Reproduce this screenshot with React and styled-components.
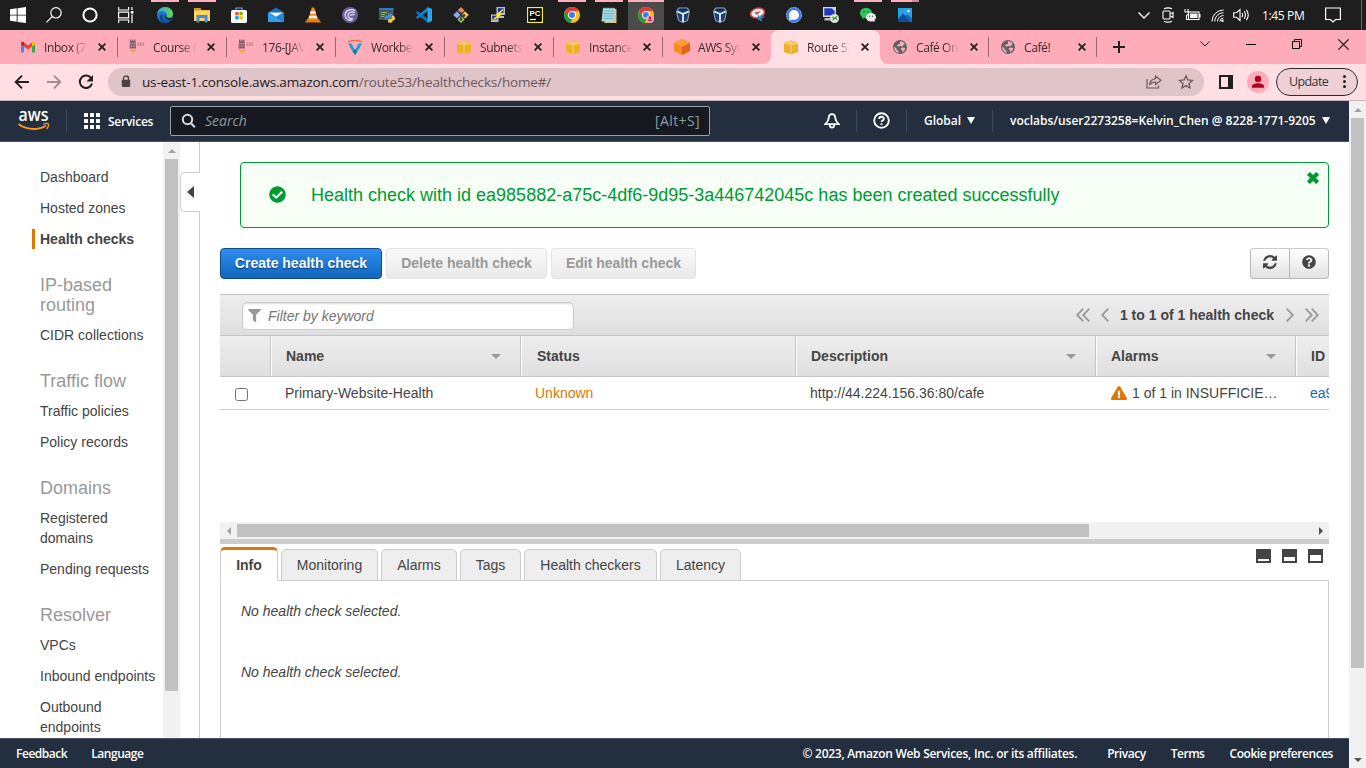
import React from 'react';
import styled, { createGlobalStyle, css } from 'styled-components';
import { FaCheckCircle, FaQuestionCircle, FaExclamationTriangle, FaFilter } from 'react-icons/fa';

const ui = '"Open Sans", "Noto Sans", sans-serif';
const arial = '"Liberation Sans", Arial, sans-serif';

const GlobalStyle = createGlobalStyle`
  * { box-sizing: border-box; }
  html, body { margin: 0; padding: 0; overflow: hidden; background: #fff; }
  svg { display: block; flex: none; }
`;

const Screen = styled.div`
  width: 1366px;
  height: 768px;
  display: flex;
  flex-direction: column;
  overflow: hidden;
  font-family: ${arial};
  font-size: 14px;
  color: #444;
`;

/* ---------- Taskbar ---------- */

const Taskbar = styled.div`
  height: 30px;
  flex: none;
  display: flex;
  background: #1e1e1e;
  color: #fff;
`;

const SystemButtons = styled.div`
  display: flex;
  margin-right: 3px;
`;

const RunningApps = styled.div`
  display: flex;
  gap: 1px;
`;

const TaskButton = styled.div`
  position: relative;
  width: 36px;
  height: 30px;
  display: flex;
  align-items: center;
  justify-content: center;
  background: ${p => (p.$active ? '#4c4b4b' : 'transparent')};
  ${p => p.$open && css`
    &::before {
      content: '';
      position: absolute;
      top: 0;
      left: ${p.$active ? 0 : 4}px;
      right: ${p.$active ? 0 : 4}px;
      height: 2px;
      background: ${p.$stacked ? 'linear-gradient(90deg, #ffaebb 21px, #c98c96 21px)' : '#ffaebb'};
    }
  `}
`;

const Tray = styled.div`
  margin-left: auto;
  display: flex;
  align-items: center;
  padding-right: 4px;
`;

const TrayIcon = styled.div`
  width: ${p => p.$w}px;
  display: flex;
  justify-content: center;
`;

const Clock = styled.div`
  width: 51px;
  padding-left: 9px;
  font: 12px ${ui};
  letter-spacing: -0.35px;
  white-space: nowrap;
`;

const DesktopPeek = styled.div`
  width: 1px;
  height: 30px;
  background: #6a6a6a;
`;

/* ---------- Browser chrome ---------- */

const TabStrip = styled.div`
  height: 34px;
  flex: none;
  display: flex;
  padding-left: 8px;
  background: #ffacba;
`;

const BrowserTab = styled.div`
  position: relative;
  width: ${p => p.$w || 109}px;
  height: 34px;
  display: flex;
  align-items: center;
  padding-left: 12px;
  border-radius: 8px 8px 0 0;
  background: ${p => (p.$active ? '#ffdee4' : 'transparent')};
  &::after {
    content: '';
    position: absolute;
    right: -1px;
    top: 7px;
    width: 1px;
    height: 20px;
    background: ${p => (p.$divider ? '#9a6670' : 'transparent')};
  }
`;

const TabCurve = styled.svg`
  position: absolute;
  bottom: 0;
  ${p => (p.$right ? 'right: -8px;' : 'left: -8px;')}
`;

const TabTitle = styled.div`
  width: 45px;
  margin-left: 8px;
  white-space: nowrap;
  font: 12px ${ui};
  letter-spacing: -0.4px;
  color: #3a2a2e;
  mask-image: ${p => (p.$fade ? 'linear-gradient(90deg, #000 62%, transparent 96%)' : 'none')};
`;

const TabClose = styled.div`
  margin-left: 8.5px;
`;

const NewTab = styled.div`
  width: 46px;
  display: flex;
  align-items: center;
  justify-content: center;
`;

const WindowControls = styled.div`
  margin-left: auto;
  display: flex;
  height: 28px;
`;

const WindowButton = styled.div`
  width: 46px;
  display: flex;
  align-items: center;
  justify-content: center;
`;

const Toolbar = styled.div`
  height: 37px;
  flex: none;
  display: flex;
  align-items: center;
  padding: 0 8px 1px 12px;
  background: #ffdee4;
  border-bottom: 1px solid #cdb6ba;
`;

const NavButton = styled.div`
  width: 32px;
  display: flex;
  padding-left: 2px;
`;

const AddressBar = styled.div`
  width: 1096px;
  height: 28px;
  display: flex;
  align-items: center;
  padding: 0 10px 0 13px;
  border-radius: 14px;
  background: #dfc4c9;
  font: 13.5px ${ui};
`;

const Url = styled.div`
  margin-left: 11px;
  flex: 1;
  white-space: nowrap;
  color: #6b5a5d;
  letter-spacing: -0.16px;
  b { font-weight: 400; color: #241c1e; }
`;

const AddressAction = styled.div`
  margin-left: 16px;
`;

const SidePanelIcon = styled.div`
  width: 14px;
  height: 14px;
  margin-left: 15px;
  border: 2px solid #1f1f1f;
  border-right-width: 5px;
`;

const Avatar = styled.div`
  width: 22px;
  height: 22px;
  margin-left: 14px;
  border-radius: 50%;
  background: #ffacba;
`;

const UpdateButton = styled.div`
  width: 82px;
  height: 28px;
  margin-left: 7px;
  display: flex;
  align-items: center;
  justify-content: space-between;
  padding: 0 11px 0 12px;
  border: 1px solid #2d2d2d;
  border-radius: 14px;
  background: #eed0d6;
  font: 12.5px ${ui};
  letter-spacing: -0.6px;
  color: #3a3436;
`;

/* ---------- Scrollbars ---------- */

const VerticalScrollbar = styled.div`
  width: 17px;
  flex: none;
  display: flex;
  flex-direction: column;
  align-items: center;
  background: #f1f1f1;
`;

const HorizontalScrollbar = styled.div`
  height: 17px;
  flex: none;
  display: flex;
  align-items: center;
  background: #f1f1f1;
`;

const ScrollArrow = styled.div`
  width: 17px;
  height: 17px;
  display: flex;
  align-items: center;
  justify-content: center;
  ${p => p.$last && (p.$last === 'v' ? 'margin-top: auto;' : 'margin-left: auto;')}
`;

const Thumb = styled.div`
  width: ${p => p.$w}px;
  height: ${p => p.$h}px;
  background: #c1c1c1;
`;

/* ---------- AWS console ---------- */

const Viewport = styled.div`
  flex: 1;
  min-height: 0;
  display: flex;
`;

const Console = styled.div`
  width: 1349px;
  display: flex;
  flex-direction: column;
`;

const ConsoleHeader = styled.div`
  height: 41px;
  flex: none;
  display: flex;
  align-items: center;
  border-bottom: 1px solid #4b5563;
  background: #232f3e;
  color: #fff;
  font: 600 12px ${ui};
  white-space: nowrap;
`;

const AwsLogo = styled.div`
  width: 66px;
  padding-left: 17px;
`;

const HeaderRule = styled.div`
  width: 1px;
  height: 22px;
  flex: none;
  background: #3f4a59;
`;

const Services = styled.div`
  width: 103px;
  display: flex;
  align-items: center;
  gap: 8px;
  padding-left: 17px;
  letter-spacing: -0.25px;
`;

const SearchBox = styled.div`
  width: 540px;
  height: 30px;
  display: flex;
  align-items: center;
  padding: 0 9px 1px 10px;
  border: 1px solid #95a5a6;
  border-radius: 2px;
  background: #16191f;
  color: #8d9c9e;
  font: 14px ${ui};
`;

const SearchHint = styled.div`
  flex: 1;
  margin-left: 8px;
  font-style: italic;
`;

const SearchShortcut = styled.div`
  letter-spacing: 0.4px;
`;

const HeaderSlot = styled.div`
  width: ${p => p.$w}px;
  display: flex;
  align-items: center;
  justify-content: center;
  gap: 6px;
  padding-bottom: 1px;
`;

const HeaderActions = styled.div`
  display: flex;
  align-items: center;
  margin-left: 97px;
`;

const Account = styled.div`
  display: flex;
  align-items: center;
  gap: 6px;
  padding: 0 0 1px 17px;
`;

const Body = styled.div`
  flex: 1;
  min-height: 0;
  display: flex;
  overflow: hidden;
  background: #fff;
`;

const Sidebar = styled.nav`
  width: 163px;
  flex: none;
  padding: 25px 0 0 40px;
  overflow: hidden;
`;

const NavItem = styled.div`
  position: relative;
  line-height: 20px;
  margin-bottom: 11px;
  width: ${p => (p.$narrow ? '90px' : 'auto')};
  white-space: ${p => (p.$narrow ? 'normal' : 'nowrap')};
  font-weight: ${p => (p.$active ? 700 : 400)};
  ${p => p.$active && css`
    margin-left: -8px;
    padding-left: 5px;
    border-left: 3px solid #e07700;
  `}
`;

const NavHeading = styled.div`
  width: 100px;
  margin: 26px 0 10px;
  font-size: 18px;
  line-height: 20px;
  color: #999;
`;

const CollapseRail = styled.div`
  width: 20px;
  flex: none;
  padding-top: 30px;
  border-right: 1px solid #ccc;
`;

const CollapseHandle = styled.div`
  width: 20px;
  height: 40px;
  display: flex;
  align-items: center;
  padding-left: 6px;
  border: 1px solid #ccc;
  border-right: 0;
  border-radius: 5px 0 0 5px;
  background: #fff;
`;

const Main = styled.main`
  width: 1149px;
  padding: 20px 20px 0;
  display: flex;
  flex-direction: column;
`;

const Alert = styled.div`
  height: 66px;
  flex: none;
  display: flex;
  align-items: center;
  margin-left: 20px;
  padding: 0 9px 0 28px;
  border: 1px solid #009933;
  border-radius: 4px;
  background: #f6fef6;
  color: #009933;
  font-size: 18px;
`;

const AlertIcon = styled.div`
  width: 17px;
  padding-bottom: 2px;
`;

const AlertText = styled.div`
  flex: 1;
  margin-left: 25px;
  white-space: nowrap;
`;

const AlertClose = styled.div`
  align-self: flex-start;
  margin-top: 9px;
`;

const Actions = styled.div`
  display: flex;
  gap: 4px;
  margin-top: 20px;
  height: 31px;
  flex: none;
`;

const Button = styled.div`
  width: ${p => p.$w}px;
  display: flex;
  align-items: center;
  justify-content: center;
  padding-bottom: 2px;
  border-radius: 4px;
  font-weight: 700;
  white-space: nowrap;
  ${p => p.$primary
    ? css`
        border: 1px solid #0f4b8a;
        background: linear-gradient(#2e8df0, #1166bb);
        color: #fff;
        text-shadow: 0 1px 1px #063a73;
      `
    : css`
        border: 1px solid #e3e3e3;
        background: linear-gradient(#f9f9f9, #eaeaea);
        color: #999;
      `}
`;

const IconGroup = styled.div`
  margin-left: auto;
  width: 79px;
  display: flex;
  border: 1px solid #b8b8b8;
  border-top-color: #ccc;
  border-radius: 4px;
  background: linear-gradient(#ffffff, #e2e2e2);
`;

const IconButton = styled.div`
  flex: 1;
  display: flex;
  align-items: center;
  justify-content: center;
  padding-bottom: 3px;
  & + & { border-left: 1px solid #b8b8b8; }
`;

const TableBar = styled.div`
  height: 42px;
  flex: none;
  margin-top: 15px;
  display: flex;
  align-items: center;
  padding: 1px 10px 0 22px;
  border-top: 1px solid #c8c8c8;
  border-bottom: 1px solid #c4c4c4;
  background: linear-gradient(#eeeeee, #dfdfdf);
`;

const FilterInput = styled.div`
  width: 332px;
  height: 28px;
  display: flex;
  align-items: center;
  gap: 7px;
  padding-left: 5px;
  border: 1px solid #ccc;
  border-radius: 5px;
  background: #fff;
  box-shadow: inset 0 1px 2px #ddd;
  font-style: italic;
  color: #757575;
`;

const Pager = styled.div`
  margin-left: auto;
  display: flex;
  align-items: center;
  gap: 11px;
  padding-bottom: 2px;
  font-weight: 700;
`;

const PagerLabel = styled.div`
  margin-right: 1px;
`;

const HeadRow = styled.div`
  height: 41px;
  flex: none;
  display: flex;
  border-bottom: 1px solid #c4c4c4;
  background: linear-gradient(#eeeeee, #dfdfdf);
  overflow: hidden;
`;

const HeadCell = styled.div`
  width: ${p => p.$w}px;
  flex: none;
  display: flex;
  align-items: center;
  justify-content: space-between;
  padding: 0 19px 0 ${p => (p.$sortable || p.$last ? 15 : 16)}px;
  border-right: 1px solid #c4c4c4;
  box-shadow: inset 1px 0 0 ${p => (p.$first ? 'transparent' : '#fff')};
  font-weight: 700;
`;

const DataRow = styled.div`
  height: 33px;
  flex: none;
  display: flex;
  border-bottom: 1px solid #ccc;
  overflow: hidden;
`;

const DataCell = styled.div`
  width: ${p => p.$w}px;
  flex: none;
  display: flex;
  align-items: center;
  gap: 5px;
  padding-left: ${p => (p.$icon ? 15 : 14)}px;
  white-space: nowrap;
  color: ${p => p.$color || '#444'};
`;

const Checkbox = styled.div`
  width: 13px;
  height: 13px;
  margin-top: 3px;
  border: 1px solid #767676;
  border-radius: 2.5px;
  background: #fff;
`;

const TableSpace = styled.div`
  height: 112px;
  flex: none;
`;

const Splitter = styled.div`
  height: 5px;
  flex: none;
  background: #ccc;
`;

const DetailTabs = styled.div`
  height: 37px;
  flex: none;
  display: flex;
  align-items: flex-end;
  gap: 3px;
  position: relative;
  z-index: 1;
  margin-bottom: -1px;
`;

const DetailTab = styled.div`
  width: ${p => p.$w}px;
  height: ${p => (p.$active ? 34 : 32)}px;
  line-height: 31px;
  text-align: center;
  white-space: nowrap;
  border: 1px solid #ccc;
  border-radius: 5px 5px 0 0;
  background: #eee;
  ${p => p.$active && css`
    border-top: 3px solid #e07700;
    border-bottom-color: #fff;
    background: #fff;
    font-weight: 700;
  `}
`;

const PaneSizes = styled.div`
  margin-left: auto;
  align-self: flex-start;
  display: flex;
  gap: 11px;
  padding: 5px 6px 0 0;
`;

const PaneSize = styled.div`
  width: 15px;
  height: 14px;
  border: 2px solid #444;
  border-top-width: ${p => p.$top}px;
`;

const DetailPanel = styled.div`
  flex: 1;
  padding: 20px 20px 0;
  border: 1px solid #ccc;
  border-bottom: 0;
  font-style: italic;
`;

const Empty = styled.p`
  margin: 0 0 41px;
  line-height: 20px;
`;

const Footer = styled.footer`
  height: 30px;
  flex: none;
  display: flex;
  align-items: center;
  padding: 0 16px;
  border-top: 1px solid #4b5563;
  background: #232f3e;
  color: #fff;
  font: 600 12px ${ui};
  white-space: nowrap;
`;

const FooterItem = styled.div`
  margin-left: ${p => (p.$push ? 'auto' : `${p.$gap || 0}px`)};
  letter-spacing: ${p => (p.$push ? -0.28 : -0.46)}px;
`;

/* ---------- Icons ---------- */

const Svg = ({ s = 16, w, h, vb, children, ...rest }) => (
  <svg width={w || s} height={h || s} viewBox={vb || `0 0 ${w || s} ${h || s}`} fill="none" {...rest}>{children}</svg>
);

const Windows = () => <Svg><path fill="#fff" d="M0 2.3 6.7 1.3V7.7H0zM7.6 1.2 16 0V7.7H7.6zM0 8.5H6.7V14.8L0 13.8zM7.6 8.5H16V16L7.6 14.9z" /></Svg>;
const Magnifier = () => <Svg stroke="#fff" strokeWidth="1.2"><circle cx="10" cy="5.8" r="5.2" /><path d="M6.2 9.6.4 15.4" /></Svg>;
const Cortana = () => <Svg><circle cx="8" cy="8" r="6.6" stroke="#fff" strokeWidth="2" /></Svg>;
const TaskView = () => <Svg stroke="#fff" strokeWidth="1.2"><path d="M.6 0v3h10V0M.6 16v-3h10v3M.6 5.2h10v5.6H.6zM14 0v3M14 7.5V16" /><path d="M12.8 4h2.6v2.6h-2.6z" fill="#fff" stroke="none" /></Svg>;

const Edge = () => (
  <Svg>
    <defs>
      <linearGradient id="edgeTop" x1="0" y1="0" x2="16" y2="6" gradientUnits="userSpaceOnUse"><stop stopColor="#2ba6df" /><stop offset="1" stopColor="#62d84f" /></linearGradient>
    </defs>
    <circle cx="8" cy="8" r="8" fill="#1b77cd" />
    <path d="M0 7.4C1 3 4 0 8.2 0 13 0 16 3.6 16 7c0 2.4-1.9 3.9-4 3.9-2 0-3-.8-2.3-1.9C11 6.6 8 3.9 5 4.2 2.5 4.4.9 5.9 0 7.4z" fill="url(#edgeTop)" />
    <path d="M6.2 7.2C4.5 11 8 15 13.5 13.8 10 17.4 3 16 2.6 10.7 2.5 8.5 4.2 7.1 6.2 7.2z" fill="#114a8b" />
    <path d="M9.3 8.2c-.8 1.5 1.2 3.6 5.9 2.2l-1.4 2.8c-4.3 1-7-1.9-6.2-5z" fill="#1f1f1f" opacity=".85" />
  </Svg>
);
const Explorer = () => <Svg><path fill="#d9952b" d="M0 1h6.500l1 2H16v4H0z" /><path fill="#ffd55f" d="M0 3.500h16V14H0z" /><path fill="#3d8fd8" d="M2.500 8h11v7.500h-3V11h-5v4.500h-3z" /></Svg>;
const Store = () => <Svg><path d="M5 3.500V1h6v2.500" stroke="#4cb8ee" strokeWidth="1.200" /><rect y="3" width="16" height="13" rx="1.500" fill="#f7f7f7" /><path fill="#f25022" d="M4.300 5h3.300v3.300H4.300z" /><path fill="#7fba00" d="M8.400 5h3.300v3.300H8.400z" /><path fill="#00a4ef" d="M4.300 9.100h3.300v3.300H4.300z" /><path fill="#ffb900" d="M8.400 9.100h3.300v3.300H8.400z" /></Svg>;
const Mail = () => <Svg><path fill="#1170c0" d="M0 5.500 8 .5l8 5z" /><path fill="#2488d8" d="M0 5.500h16V15H0z" /><path fill="#f4f4f4" d="M1 5.500h14L8 9.800z" /><path fill="#2ea3ea" d="M0 15V6l15 9z" /><path fill="#1f86d6" d="M16 15V6L8 10.500z" /></Svg>;
const Cone = () => <Svg><path fill="#e67a13" d="M2.500 11.500h11L16 15.500H0z" /><path fill="#f28a1c" d="M6.800.5h2.400l3.600 12.500H3.200z" /><path fill="#e9e9e9" d="M5.700 4h4.600l.9 2.700H4.800zM4.200 8.700h7.600l.8 2.600H3.400z" /></Svg>;
const Torrent = () => <Svg><circle cx="8" cy="8" r="8" fill="#6d5f9e" /><path d="M13.500 3.500C8 1 3 4 3.200 8.500 3.500 12 7 14 10.500 13M13 5.700C9.500 4 6 5.500 6 8.500c.2 2.500 2.500 3.500 5 3M12.500 8c-2-1-4-.3-4 1" stroke="#e6e0f2" strokeWidth="1.300" /></Svg>;
const PyWindow = () => <Svg><rect y="1" width="14.500" height="12" fill="#43586a" /><path fill="#2b7bb9" d="M0 1h14.500v2H0z" /><path d="M2 5.500h6M2 7.500h4M2 9.500h3" stroke="#8fb35b" /><path fill="#4389c9" d="M5.500 10.500C5.500 8 7 8.500 9 8.500V6.500c2.500-1 4 0 4 1.500v3H9L7.500 13c-1.500 0-2-1-2-2.500z" /><path fill="#f1c83b" d="M9 14.500c0-3 1-2.500 4-3V8.500c2.500 0 3 1.500 3 3s-1 2-2.500 2V15c-2 1.200-4.500.8-4.500-.5z" /></Svg>;
const VsCode = () => <Svg><path fill="#0b73b7" d="M.3 5.200 1.500 4 12 12v4L.3 6.300z" /><path fill="#1180c8" d="M.3 10.800 1.500 12 12 4V0L.3 9.700z" /><path d="M11.500 0 16 2v12l-4.500 2z" fill="#2ea5ea" /></Svg>;
const GitIcon = () => <Svg><path fill="#f0806a" d="m8 0 3.500 3.500L8 7 4.500 3.500z" /><path fill="#7fb0f5" d="M4 4.300 7.500 8 4 11.600.2 8z" /><path fill="#f0c95c" d="M12 4.300 15.800 8 12 11.600 8.500 8z" /><path fill="#a4d66a" d="M8 9l3.500 3.500L8 16l-3.500-3.500z" /><path d="M5 3.500 11 9.500M8 5v8" stroke="#333" /><circle cx="8" cy="12.500" r="1.300" fill="#333" /><circle cx="11" cy="8.500" r="1.300" fill="#333" /></Svg>;
const Putty = () => <Svg><path fill="#bdbdbd" d="M6.500 0H15v8H6.500zM1 7.500h7.500V15H1zM8 9h6v2H8z" /><path fill="#1b2aa5" d="M8 1.200h5.500v4.500H8zM2.300 8.700h4.700v3.800H2.300z" /><path d="M13 2.500 7.500 7.500h3L4 12" stroke="#f4ea28" strokeWidth="1.600" /></Svg>;
const PyCharm = () => <Svg><rect x=".6" y=".6" width="14.800" height="14.800" fill="#000" stroke="#f5f13b" strokeWidth="1.200" /><text x="2.500" y="9" fontFamily="Liberation Sans" fontWeight="700" fontSize="8" fill="#fff">PC</text><path d="M3 12.500h6" stroke="#fff" strokeWidth="1.300" /></Svg>;
const Chrome = ({ badge }) => (
  <Svg>
    <circle cx="8" cy="8" r="8" fill="#fbc116" />
    <path fill="#e33b2e" d="M1.100 4A8 8 0 0 1 14.900 4H8L4.500 10z" />
    <path fill="#259a47" d="M1.100 4 4.500 10 8 12 7 15.900A8 8 0 0 1 1.100 4z" />
    <circle cx="8" cy="8" r="3.900" fill="#fff" /><circle cx="8" cy="8" r="3" fill="#3b7de9" />
    {badge && <><circle cx="12" cy="12" r="4" fill="#f5a3b3" /><circle cx="12" cy="11" r="1.400" fill="#b3284c" /><path fill="#b3284c" d="M9.800 14c.5-2 3.900-2 4.400 0z" /></>}
  </Svg>
);
const Notepad = () => <Svg><path fill="#d9c08a" d="M12 2h3.500v14H3z" /><path fill="#a8dbe4" d="M2 1h12l-1 13.500H.5z" /><path d="M3 4h10M2.800 6.500h10M2.500 9h10M2.200 11.500h10" stroke="#5fa7b8" strokeWidth=".8" /><path d="M2.500 1.200h11" stroke="#7b8b90" strokeWidth="1.600" strokeDasharray="1 1" /></Svg>;
const VBox = () => <Svg><path fill="#1c3f73" stroke="#a9bdd6" strokeWidth=".9" d="M3.500 1h9l2 3.500-2 9L8 15.500l-4.500-2-2-9z" /><path d="M2.300 4.500 8 7l5.700-2.500" stroke="#f2f6fb" strokeWidth="1.500" /><path d="M8 7v8" stroke="#f2f6fb" strokeWidth="1.700" /><path d="M4.500 2.500h7" stroke="#0d2244" strokeWidth="1.500" /></Svg>;
const Snip = () => <Svg><ellipse cx="8.500" cy="6" rx="7" ry="4.800" fill="#f2f2f2" stroke="#d9424a" strokeWidth="1.500" transform="rotate(-15 8.500 6)" /><path d="M8 8 5 5.500 12 4z" fill="#c95359" /><path d="M9 8.500 12.500 14M13 9 9 13" stroke="#2f8fc6" strokeWidth="1.500" /><circle cx="13.200" cy="9.500" r="1.600" stroke="#2f8fc6" /></Svg>;
const Signal = () => <Svg><circle cx="8" cy="8" r="7.500" fill="#3b76f0" stroke="#9fbdf8" strokeDasharray="2 .6" /><circle cx="8" cy="8" r="5" fill="#fff" /><path fill="#fff" d="m2.800 13.500 1-3.500 2.600 2.600z" /></Svg>;
const Remote = () => <Svg><rect x="0" y="0" width="13" height="10" fill="#d8d8cf" /><path fill="#2238c4" d="M1.300 1.300h10.400v7.200H1.300z" /><path fill="#fff" d="M9 1.300h2.700v3z" /><path fill="#bdbdb5" d="M1.500 11h8.500v2.500H1.500z" /><circle cx="11.500" cy="11.500" r="4.500" fill="#dfe5df" /><path d="m9.500 10 2 1.500-2 1.500m4.500-3.500-2 1.500 2 1.500" stroke="#3c8f3c" strokeWidth="1.200" /></Svg>;
const WeChat = () => <Svg><ellipse cx="6" cy="6" rx="6" ry="5.200" fill="#2fc35d" /><path fill="#2fc35d" d="m2 12 .6-3L5 10.500z" /><circle cx="4" cy="4.800" r=".8" fill="#175c2c" /><circle cx="8" cy="4.800" r=".8" fill="#175c2c" /><ellipse cx="11" cy="10.200" rx="5" ry="4.300" fill="#ececec" /><path fill="#ececec" d="m14.700 15.200-.6-2.500-2 1z" /><circle cx="9.500" cy="9.200" r=".7" fill="#555" /><circle cx="12.600" cy="9.200" r=".7" fill="#555" /></Svg>;
const Photos = () => <Svg><path fill="#2b9fe8" d="M1 1h14v14H1z" /><path fill="#0b4f9c" d="m1 12 5-5.500L14 15H1z" /><path fill="#1769bd" d="m8.500 9 2-1.800L15 11.500V15h-1z" /><circle cx="11.500" cy="4" r="1.200" fill="#fff" /></Svg>;

const apps = [
  { icon: Edge, open: true }, { icon: Explorer, open: true }, { icon: Store }, { icon: Mail }, { icon: Cone },
  { icon: Torrent }, { icon: PyWindow }, { icon: VsCode }, { icon: GitIcon }, { icon: Putty }, { icon: PyCharm },
  { icon: Chrome, open: true }, { icon: Notepad, open: true }, { icon: Chrome, open: true, active: true },
  { icon: VBox }, { icon: VBox }, { icon: Snip }, { icon: Signal }, { icon: Remote }, { icon: WeChat, open: true },
  { icon: Photos, open: true, stacked: true },
];

const Gmail = () => <Svg><path fill="#4285f4" d="M1 4v9.500h3V7.500L1 5z" /><path fill="#34a853" d="M12 13.500h3V5l-3 2.500z" /><path fill="#ea4335" d="M4 3.500 8 6.600l4-3.100v4L8 10.500 4 7.500z" /><path fill="#c5221f" d="M1 4.200C1 2.600 2.800 2.300 4 3.300v4.200L1 5.300z" /><path fill="#fbbc04" d="M12 3.300c1.200-1 3-.7 3 .9v1.100l-3 2.200z" /></Svg>;
const Vocareum = () => <Svg><path fill="#5f4450" opacity=".75" d="M1 .5h1.200v1.200h1V.5h1v1.200h1V.5h1.300l.5 9H.5z" /><path d="M1 4.500h5.500M1 7h5.500" stroke="#cf8f9c" strokeWidth=".8" /><path d="M8.500 5.200h7" stroke="#8d5f6c" strokeWidth="3.400" strokeDasharray="1.600 .7" opacity=".5" /><path d="M1.200 10.500Q4.200 13.500 7 10.500" stroke="#f79a4a" strokeWidth="1.500" /><path d="M2.500 12h3.400L4.200 15z" fill="#f8a552" /></Svg>;
const Workbench = () => <Svg><path fill="#19a3d4" d="M1 4.500h3.500L8 11.500l3.500-7H15L8.800 15.500H7.200z" /><path fill="#0e6f9c" d="m8 15.500-1.500-3L8 9.500l1.500 3z" /><path d="M1 3C4 .7 12 .7 15 3" stroke="#f0683c" strokeWidth="1.300" /></Svg>;
const Cube = () => <Svg><path fill="#eeb02a" d="M1 4 8 1.500 15 4v9L8 15.500 1 13z" /><path fill="#f7c24a" d="M1 4 8 1.500 15 4 8 5.500z" /><path d="M8 5.500v10M1 4.200l7 1.500 7-1.500M5 2.800l6.500 2.200" stroke="#fadb93" strokeWidth=".8" /></Svg>;
const OrangeCube = () => <Svg><path fill="#f58a1f" d="M0 4 8 0l8 4v8l-8 4-8-4z" /><path fill="#fb9d33" d="m0 4 8-4 8 4-8 4z" /><path fill="#e5611c" d="m8 8 8-4v8l-8 4z" /></Svg>;
const Globe = () => <Svg><circle cx="8" cy="8" r="7" fill="#5f6368" /><path fill="#ffacba" d="M2.300 7.500 4.500 9.500v1.200l2 1v2.200A6 6 0 0 1 2.300 7.500zM8 2.200c2.300 0 4 1.300 5 2.800l-1.500.5-1 2.200-2-1-1.800.8-1.700-.8 1.300-1.500 1.700-.3zM9 9l2.500-.5 1.800 1c-.5 1.800-1.700 3-3.300 3.800l.3-2.300-1.800-1z" /></Svg>;

const Cross = ({ s = 8, w = 1.8, c = '#231f20' }) => {
  const near = w / 3;
  const far = s - near;
  return <Svg s={s} stroke={c} strokeWidth={w}><path d={`M${near} ${near}L${far} ${far}M${far} ${near}L${near} ${far}`} /></Svg>;
};

const Triangle = ({ dir, c = '#505050', long = 8, short = 4 }) => {
  const vertical = dir === 'up' || dir === 'down';
  const w = vertical ? long : short;
  const h = vertical ? short : long;
  const points = {
    up: `0,${h} ${w},${h} ${w / 2},0`,
    down: `0,0 ${w},0 ${w / 2},${h}`,
    left: `${w},0 ${w},${h} 0,${h / 2}`,
    right: `0,0 0,${h} ${w},${h / 2}`,
  }[dir];
  return <Svg w={w} h={h}><polygon points={points} fill={c} /></Svg>;
};

const AwsMark = () => (
  <Svg w={34} h={24}>
    <text x="1.500" y="12" fontFamily="Open Sans" fontWeight="600" fontSize="18" textLength="30" lengthAdjust="spacingAndGlyphs" fill="#fff">aws</text>
    <path d="M1.500 15C9 21 21 21.500 29 16.700" stroke="#f7981f" strokeWidth="1.900" />
    <path d="M26.200 15.300c2-.9 4.500-.8 5.200-.2.400.9-.3 3.300-1.800 5" stroke="#f7981f" strokeWidth="1.300" />
  </Svg>
);

const Refresh = () => <Svg s={14} vb="0 0 1536 1536"><path fill="#444" d="M1511 928q0 5-1 7-64 268-268 434.5T764 1536q-146 0-282.500-55T238 1324l-129 129q-19 19-45 19t-45-19-19-45V960q0-26 19-45t45-19h448q26 0 45 19t19 45-19 45l-137 137q71 66 161 102t187 36q134 0 250-65t186-179q11-17 53-117 8-23 30-23h192q13 0 22.500 9.500t9.500 22.500zm25-800v448q0 26-19 45t-45 19h-448q-26 0-45-19t-19-45 19-45l138-138Q969 256 768 256q-134 0-250 65T332 500q-11 17-53 117-8 23-30 23H50q-13 0-22.500-9.500T18 608v-7q65-268 270-434.500T768 0q146 0 284 55.500T1297 212l130-129q19-19 45-19t45 19 19 45z" /></Svg>;

const Chevrons = ({ double, flip }) => (
  <Svg w={double ? 14 : 8} h={14} stroke="#999" strokeWidth="1.800">
    <g transform={flip ? `translate(${double ? 14 : 8} 0) scale(-1 1)` : undefined}>
      <path d="M7.300.7 1.200 7l6.100 6.300" />
      {double && <path d="M13.300.7 7.200 7l6.100 6.300" />}
    </g>
  </Svg>
);

/* ---------- Data ---------- */

const tabs = [
  { title: 'Inbox (7', icon: Gmail, divider: true },
  { title: 'Course M', icon: Vocareum, divider: true },
  { title: '176-[JAV', icon: Vocareum, divider: true },
  { title: 'Workber', icon: Workbench, divider: true },
  { title: 'Subnets', icon: Cube, divider: true },
  { title: 'Instance', icon: Cube, divider: true },
  { title: 'AWS Sys', icon: OrangeCube },
  { title: 'Route 53', icon: Cube, active: true },
  { title: 'Café Orc', icon: Globe, divider: true, w: 108 },
  { title: 'Café!', icon: Globe, divider: true, w: 108, plain: true },
];

const nav = [
  { items: [['Dashboard'], ['Hosted zones'], ['Health checks', 'active']] },
  { heading: 'IP-based routing', items: [['CIDR collections']] },
  { heading: 'Traffic flow', items: [['Traffic policies'], ['Policy records']] },
  { heading: 'Domains', items: [['Registered domains', 'narrow'], ['Pending requests']] },
  { heading: 'Resolver', items: [['VPCs'], ['Inbound endpoints'], ['Outbound endpoints', 'narrow']] },
];

const columns = [['', 51], ['Name', 250, true], ['Status', 275], ['Description', 300, true], ['Alarms', 200, true], ['ID', 200]];

const detailTabs = [['Info', 58, true], ['Monitoring', 97], ['Alarms', 76], ['Tags', 61], ['Health checkers', 133], ['Latency', 81]];

/* ---------- Sections ---------- */

const TaskbarSection = () => (
  <Taskbar>
    <SystemButtons>
      {[Windows, Magnifier, Cortana, TaskView].map((Icon, i) => <TaskButton key={i}><Icon /></TaskButton>)}
    </SystemButtons>
    <RunningApps>
      {apps.map(({ icon: Icon, open, active, stacked }, i) => (
        <TaskButton key={i} $open={open} $active={active} $stacked={stacked}><Icon badge={active} /></TaskButton>
      ))}
    </RunningApps>
    <Tray>
      <TrayIcon $w={24}><Svg w={12} h={7} stroke="#fff" strokeWidth="1.300"><path d="m.5.500 5.500 5.500L11.500.5" /></Svg></TrayIcon>
      <TrayIcon $w={24}><Svg w={12} h={16} stroke="#fff" strokeWidth="1.100"><rect x="1" y="4" width="7" height="8" rx="1" /><path d="M8.500 7 11 5.500v5L8.500 9M2 1.800Q6 0 10 1.800M2 14.200q4 1.800 8 0" /></Svg></TrayIcon>
      <TrayIcon $w={25}><Svg w={17} h={12} stroke="#fff" strokeWidth="1.100"><rect x="4.500" y="3" width="10.500" height="7.500" /><path fill="#fff" stroke="none" d="M6 4.500h7.500V9H6zM15 5h1.500v3.500H15z" /><path d="M1 0v2.500M4 0v2.500M.5 3h4v2l-2 1.500v4h2" /></Svg></TrayIcon>
      <TrayIcon $w={24}><Svg w={13} h={13} stroke="#fff" strokeWidth="1"><path d="M1 12.500A11.500 11.500 0 0 1 12.500 1M3.700 12.500a8.800 8.800 0 0 1 8.800-8.800M6.500 12.500a6 6 0 0 1 6-6M9 12.500A3.500 3.500 0 0 1 12.500 9" /><circle cx="11.500" cy="11.700" r="1.200" fill="#fff" stroke="none" /></Svg></TrayIcon>
      <TrayIcon $w={24}><Svg w={17} h={14} stroke="#fff" strokeWidth="1.100"><path d="M.7 4.700h2.800L7 1.500v11L3.500 9.300H.7zM9 5q1.300 2 0 4M11.200 3.300q2.500 3.700 0 7.400M13.400 1.700q3.700 5.300 0 10.600" /></Svg></TrayIcon>
      <Clock>1:45 PM</Clock>
      <TrayIcon $w={57}><Svg w={16} h={16} stroke="#fff" strokeWidth="1.200"><path d="M.6 1h14.800v11.500h-4.800L8 15l-2.600-2.500H.6z" /></Svg></TrayIcon>
      <DesktopPeek />
    </Tray>
  </Taskbar>
);

const TabStripSection = () => (
  <TabStrip>
    {tabs.map(({ title, icon: Icon, active, divider, w, plain }, i) => (
      <BrowserTab key={i} $active={active} $divider={divider} $w={w}>
        {active && (
          <>
            <TabCurve width="8" height="8"><path d="M8 0v8H0a8 8 0 0 0 8-8z" fill="#ffdee4" /></TabCurve>
            <TabCurve $right width="8" height="8"><path d="M0 0v8h8a8 8 0 0 1-8-8z" fill="#ffdee4" /></TabCurve>
          </>
        )}
        <Icon />
        <TabTitle $fade={!plain}>{title}</TabTitle>
        <TabClose><Cross /></TabClose>
      </BrowserTab>
    ))}
    <NewTab><Svg s={12} stroke="#231f20" strokeWidth="2"><path d="M6 0v12M0 6h12" /></Svg></NewTab>
    <WindowControls>
      <WindowButton><Svg w={10} h={6} stroke="#231f20"><path d="m.5.500 4.500 4.500L9.500.5" /></Svg></WindowButton>
      <WindowButton><Svg w={10} h={10} stroke="#000"><path d="M0 5.500h10" /></Svg></WindowButton>
      <WindowButton><Svg w={10} h={10} stroke="#000"><path d="M.5 2.500h7v7h-7zM2.500 2.500v-2h7v7h-2" /></Svg></WindowButton>
      <WindowButton><Cross s={11} w={1.1} c="#000" /></WindowButton>
    </WindowControls>
  </TabStrip>
);

const ToolbarSection = () => (
  <Toolbar>
    <NavButton><Svg stroke="#231f20" strokeWidth="1.900"><path d="M15 8H2M8 1.700 1.700 8 8 14.300" /></Svg></NavButton>
    <NavButton><Svg stroke="#a58d92" strokeWidth="1.900"><path d="M1 8h13M8 1.700 14.300 8 8 14.300" /></Svg></NavButton>
    <NavButton><Svg><path d="M13.300 4.500A6.200 6.200 0 1 0 14 9.500" stroke="#231f20" strokeWidth="2" /><path d="M15 1v6.500H8.500z" fill="#231f20" /></Svg></NavButton>
    <AddressBar>
      <Svg w={10} h={13}><path d="M2.500 5V3.500a2.500 2.500 0 0 1 5 0V5" stroke="#4d4346" strokeWidth="1.400" /><rect x=".8" y="4.800" width="8.400" height="7.200" rx="1" fill="#4d4346" /></Svg>
      <Url><b>us-east-1.console.aws.amazon.com</b>/route53/healthchecks/home#/</Url>
      <Svg stroke="#6b5a5d" strokeWidth="1.200"><path d="M1 5v9h11.500v-2.500M9.500 2 15 6.300l-5.500 4.200V8C6.500 8 5 9 3.500 11 4 7.500 6 5 9.500 4.600z" /></Svg>
      <AddressAction><Svg stroke="#6b5a5d" strokeWidth="1.300"><path d="m8 1.800 1.800 4.200 4.700.4-3.500 3 1 4.600L8 11.600 4 14l1-4.600-3.500-3 4.700-.4z" /></Svg></AddressAction>
    </AddressBar>
    <SidePanelIcon />
    <Avatar><Svg s={22}><circle cx="11" cy="8" r="3.200" fill="#b00020" /><path fill="#b00020" d="M5 16.800v-1.300c0-2.200 3-3.300 6-3.300s6 1.100 6 3.300v1.300z" /></Svg></Avatar>
    <UpdateButton>Update<Svg w={3} h={13}><g fill="#231f20"><circle cx="1.500" cy="1.500" r="1.500" /><circle cx="1.500" cy="6.500" r="1.500" /><circle cx="1.500" cy="11.500" r="1.500" /></g></Svg></UpdateButton>
  </Toolbar>
);

const HeaderSection = () => (
  <ConsoleHeader>
    <AwsLogo><AwsMark /></AwsLogo>
    <HeaderRule />
    <Services>
      <Svg>{[0, 6, 12].map(y => [0, 6, 12].map(x => <rect key={`${x}-${y}`} x={x} y={y} width="4" height="4" rx=".5" fill="#fff" />))}</Svg>
      Services
    </Services>
    <SearchBox>
      <Svg stroke="#d5dbdb" strokeWidth="2"><circle cx="6.500" cy="6.500" r="4.700" /><path d="m9.800 10 4 4.300" /></Svg>
      <SearchHint>Search</SearchHint>
      <SearchShortcut>[Alt+S]</SearchShortcut>
    </SearchBox>
    <HeaderActions>
      <HeaderSlot $w={49}><Svg stroke="#fff" strokeWidth="1.800"><path d="M8 1.200C5.500 1.200 4.800 3 4.700 5 4.600 7.500 3.500 9 1.300 11.200h13.400C12.500 9 11.400 7.500 11.300 5 11.200 3 10.500 1.200 8 1.200zM5.700 11.500c0 4.200 4.600 4.200 4.600 0" /></Svg></HeaderSlot>
      <HeaderRule />
      <HeaderSlot $w={49}><Svg s={17} stroke="#fff" strokeWidth="1.900"><circle cx="8.500" cy="8.500" r="7.300" /><path d="M6.200 7c.1-3 4.700-2.900 4.600-.1 0 1.600-2.200 1.500-2.300 3.100M8.500 11.200v1.700" /></Svg></HeaderSlot>
      <HeaderRule />
      <HeaderSlot $w={85}>Global<Triangle dir="down" c="#fff" long={8} short={7} /></HeaderSlot>
      <HeaderRule />
      <Account>voclabs/user2273258=Kelvin_Chen @ 8228-1771-9205<Triangle dir="down" c="#fff" long={8} short={7} /></Account>
    </HeaderActions>
  </ConsoleHeader>
);

const SidebarSection = () => (
  <>
    <Sidebar>
      {nav.map(({ heading, items }, i) => (
        <React.Fragment key={i}>
          {heading && <NavHeading>{heading}</NavHeading>}
          {items.map(([label, kind]) => (
            <NavItem key={label} $active={kind === 'active'} $narrow={kind === 'narrow'}>{label}</NavItem>
          ))}
        </React.Fragment>
      ))}
    </Sidebar>
    <VerticalScrollbar>
      <ScrollArrow><Triangle dir="up" c="#a3a3a3" /></ScrollArrow>
      <Thumb $w={13} $h={532} />
    </VerticalScrollbar>
    <CollapseRail><CollapseHandle><Triangle dir="left" c="#444" long={12} short={7} /></CollapseHandle></CollapseRail>
  </>
);

const MainSection = () => (
  <Main>
    <Alert>
      <AlertIcon><FaCheckCircle size={17} /></AlertIcon>
      <AlertText>Health check with id ea985882-a75c-4df6-9d95-3a446742045c has been created successfully</AlertText>
      <AlertClose><Cross s={12} w={4.2} c="#009933" /></AlertClose>
    </Alert>
    <Actions>
      <Button $primary $w={162}>Create health check</Button>
      <Button $w={161}>Delete health check</Button>
      <Button $w={145}>Edit health check</Button>
      <IconGroup>
        <IconButton><Refresh /></IconButton>
        <IconButton><FaQuestionCircle size={14} color="#444" /></IconButton>
      </IconGroup>
    </Actions>
    <TableBar>
      <FilterInput><FaFilter size={13} color="#999" />Filter by keyword</FilterInput>
      <Pager>
        <Chevrons double /><Chevrons /><PagerLabel>1 to 1 of 1 health check</PagerLabel><Chevrons flip /><Chevrons double flip />
      </Pager>
    </TableBar>
    <HeadRow>
      {columns.map(([label, w, sortable], i) => (
        <HeadCell key={i} $w={w} $first={i === 0} $last={i === columns.length - 1} $sortable={sortable}>
          {label}{sortable && <Triangle dir="down" c="#999" long={10} short={5} />}
        </HeadCell>
      ))}
    </HeadRow>
    <DataRow>
      <DataCell $w={51} $icon><Checkbox /></DataCell>
      <DataCell $w={250}>Primary-Website-Health</DataCell>
      <DataCell $w={275} $color="#e07700">Unknown</DataCell>
      <DataCell $w={300}>http://44.224.156.36:80/cafe</DataCell>
      <DataCell $w={200} $icon><FaExclamationTriangle size={16} color="#e07700" />1 of 1 in INSUFFICIE…</DataCell>
      <DataCell $w={200} $color="#1166bb">ea985882</DataCell>
    </DataRow>
    <TableSpace />
    <HorizontalScrollbar>
      <ScrollArrow><Triangle dir="left" c="#a3a3a3" /></ScrollArrow>
      <Thumb $w={852} $h={13} />
      <ScrollArrow $last="h"><Triangle dir="right" /></ScrollArrow>
    </HorizontalScrollbar>
    <Splitter />
    <DetailTabs>
      {detailTabs.map(([label, w, active]) => <DetailTab key={label} $w={w} $active={active}>{label}</DetailTab>)}
      <PaneSizes><PaneSize $top={10} /><PaneSize $top={8} /><PaneSize $top={6} /></PaneSizes>
    </DetailTabs>
    <DetailPanel>
      <Empty>No health check selected.</Empty>
      <Empty>No health check selected.</Empty>
    </DetailPanel>
  </Main>
);

const FooterSection = () => (
  <Footer>
    <FooterItem>Feedback</FooterItem>
    <FooterItem $gap={24}>Language</FooterItem>
    <FooterItem $push>© 2023, Amazon Web Services, Inc. or its affiliates.</FooterItem>
    <FooterItem $gap={30}>Privacy</FooterItem>
    <FooterItem $gap={25}>Terms</FooterItem>
    <FooterItem $gap={25}>Cookie preferences</FooterItem>
  </Footer>
);

export default function App() {
  return (
    <Screen>
      <GlobalStyle />
      <TaskbarSection />
      <TabStripSection />
      <ToolbarSection />
      <Viewport>
        <Console>
          <HeaderSection />
          <Body>
            <SidebarSection />
            <MainSection />
          </Body>
          <FooterSection />
        </Console>
        <VerticalScrollbar>
          <ScrollArrow><Triangle dir="up" c="#a3a3a3" /></ScrollArrow>
          <Thumb $w={13} $h={550} />
          <ScrollArrow $last="v"><Triangle dir="down" /></ScrollArrow>
        </VerticalScrollbar>
      </Viewport>
    </Screen>
  );
}
